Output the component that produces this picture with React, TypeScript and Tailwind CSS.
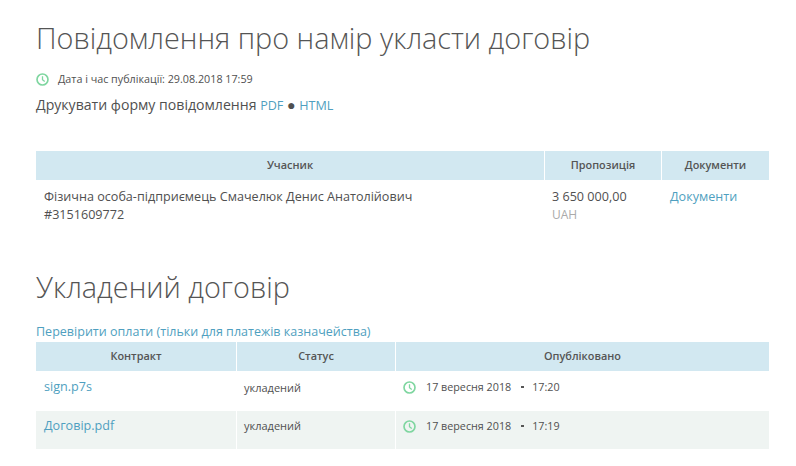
function Clock({ size = 13 }: { size?: number }) {
  return (
    <svg width={size} height={size} viewBox="0 0 14 14" fill="none" className="shrink-0">
      <circle cx="7" cy="7" r="5.9" stroke="#7fd6a0" strokeWidth="1.8" />
      <path d="M7 3.6V7.2L9.4 9.2" stroke="#7fd6a0" strokeWidth="1.4" />
    </svg>
  );
}

function Published({ time }: { time: string }) {
  return (
    <div className="flex items-center">
      <Clock />
      <span className="ml-[10px] text-[10.75px]">17 вересня 2018</span>
      <span className="ml-[10px] w-[3px] h-[2px] bg-[#555]" />
      <span className="ml-[8px] text-[10.75px]">{time}</span>
    </div>
  );
}

export default function App() {
  return (
    <div className="w-[796px] h-[466px] overflow-hidden bg-white pl-[36px] pr-[27px] pt-[19px] text-[#505050] font-['Open_Sans',sans-serif]">
      <h1 className="text-[28.8px] leading-[38px] font-light text-[#555555]">Повідомлення про намір укласти договір</h1>
      <div className="flex items-center mt-[14px] h-[16px]">
        <Clock />
        <span className="ml-[9px] text-[10.75px]">Дата і час публікації: 29.08.2018 17:59</span>
      </div>
      <div className="mt-[8px] text-[14.1px] leading-[20px]">
        Друкувати форму повідомлення <a className="text-[#4f9fc0] text-[12.6px]">PDF</a> ● <a className="text-[#4f9fc0] text-[12.6px]">HTML</a>
      </div>

      <div className="mt-[35px] grid grid-cols-[508px_116px_107px] gap-x-px">
        <div className="h-[29px] bg-[#d2e8f1] flex items-center justify-center text-[10.9px] font-semibold text-[#555555]">Учасник</div>
        <div className="h-[29px] bg-[#d2e8f1] flex items-center justify-center text-[10.9px] font-semibold text-[#555555]">Пропозиція</div>
        <div className="h-[29px] bg-[#d2e8f1] flex items-center justify-center text-[10.9px] font-semibold text-[#555555]">Документи</div>
        <div className="px-[8px] pt-[8px] h-[52px] text-[12.6px] leading-[18px]">
          Фізична особа-підприємець Смачелюк Денис Анатолійович
          <br />
          #3151609772
        </div>
        <div className="pl-[7px] pt-[8px] text-[12.6px] leading-[18px]">
          3 650 000,00
          <br />
          <span className="text-[#aaaaaa] text-[12px]">UAH</span>
        </div>
        <div className="px-[8px] pt-[8px] text-[12.6px] leading-[18px] text-[#4f9fc0]">Документи</div>
      </div>

      <h2 className="mt-[36px] text-[28.8px] leading-[38px] font-light text-[#555555]">Укладений договір</h2>
      <div className="mt-[17px] text-[12.54px] leading-[17px] text-[#4f9fc0]">Перевірити оплати (тільки для платежів казначейства)</div>

      <div className="mt-[2px] grid grid-cols-[200px_158px_373px] gap-x-px">
        <div className="h-[29px] bg-[#d2e8f1] flex items-center justify-center text-[10.9px] font-semibold text-[#555555]">Контракт</div>
        <div className="h-[29px] bg-[#d2e8f1] flex items-center justify-center text-[10.9px] font-semibold text-[#555555]">Статус</div>
        <div className="h-[29px] bg-[#d2e8f1] flex items-center justify-center text-[10.9px] font-semibold text-[#555555]">Опубліковано</div>

        <div className="h-[40px] px-[8px] pt-[7px] text-[12.6px] leading-[18px] text-[#4f9fc0]">sign.p7s</div>
        <div className="h-[40px] pl-[7px] pt-[8px] text-[11px] leading-[18px]">укладений</div>
        <div className="h-[40px] pl-[7px] pt-[7px] leading-[18px]"><Published time="17:20" /></div>

        <div className="h-[38px] bg-[#eff4f2] px-[8px] pt-[6px] text-[12.6px] leading-[18px] text-[#4f9fc0]">Договір.pdf</div>
        <div className="h-[38px] bg-[#eff4f2] pl-[7px] pt-[6px] text-[11px] leading-[18px]">укладений</div>
        <div className="h-[38px] bg-[#eff4f2] pl-[7px] pt-[6px] leading-[18px]"><Published time="17:19" /></div>
      </div>
    </div>
  );
}
